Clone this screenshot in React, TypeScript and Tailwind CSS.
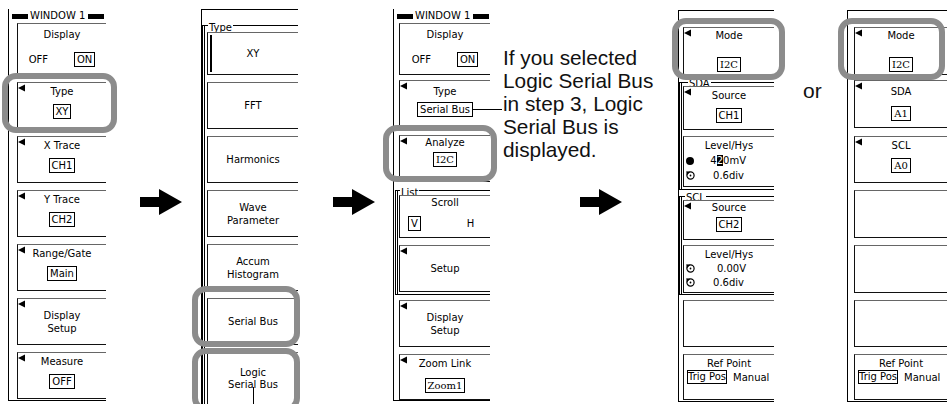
import React from "react";

type Kids = { children?: React.ReactNode };

function Tri() {
  return (
    <svg className="absolute left-0 top-[1px]" width="8" height="8" viewBox="0 0 8 8">
      <polygon points="0,4 7,0.5 7,7.5" fill="#000" />
    </svg>
  );
}

function Box({ className = "", arrow = false, children }: { className?: string; arrow?: boolean } & Kids) {
  return (
    <div className={"relative shrink-0 border-y border-l border-t-[#666] border-b-[#111] border-l-[#111] " + className}>
      {arrow ? <Tri /> : null}
      {children}
    </div>
  );
}

function Val({ children, serif = false }: { serif?: boolean } & Kids) {
  return (
    <span
      className={
        "inline-block h-[15px] whitespace-nowrap border border-black px-[2px] leading-[13px] " +
        (serif ? "font-['DejaVu_Serif',serif]" : "")
      }
    >
      {children}
    </span>
  );
}

function LV({ label, children, pt = "pt-[2px]", mt = "mt-[6px]" }: { label: string; pt?: string; mt?: string } & Kids) {
  return (
    <div className={"flex flex-col items-center " + pt}>
      <div className="h-[13px] whitespace-nowrap leading-[13px]">{label}</div>
      <div className={"flex items-center " + mt}>{children}</div>
    </div>
  );
}

function Center({ children }: Kids) {
  return (
    <div className="flex h-full flex-col items-center justify-center text-center leading-[13px]">{children}</div>
  );
}

function Ring({ className }: { className: string }) {
  return (
    <div className={"pointer-events-none absolute z-10 rounded-[14px] border-[6px] border-[#8c8c8c] " + className} />
  );
}

function Header() {
  return (
    <div className="flex h-[14px] shrink-0 items-center pl-[3px]">
      <span className="h-[5px] w-[16px] bg-black" />
      <span className="ml-[2px] whitespace-nowrap leading-[12px]">WINDOW 1</span>
      <span className="ml-[3px] h-[5px] w-[16px] bg-black" />
    </div>
  );
}

function BigArrow() {
  return (
    <svg width="42" height="26" viewBox="0 0 42 26">
      <polygon points="0,8 19,8 19,0 42,13 19,26 19,18 0,18" fill="#000" />
    </svg>
  );
}

function Knob() {
  return (
    <svg width="9" height="9" viewBox="0 0 9 9">
      <circle cx="4.5" cy="4.5" r="3.6" fill="none" stroke="#000" strokeWidth="1.2" />
      <polygon points="0.3,0.3 4.2,0.8 0.8,4.2" fill="#000" />
      <circle cx="4.5" cy="4.5" r="0.9" fill="#000" />
    </svg>
  );
}

function Dot() {
  return <span className="h-[8px] w-[8px] rounded-full bg-black" />;
}

function OffOn() {
  return (
    <div className="flex items-center">
      <span className="leading-[13px]">OFF</span>
      <span className="ml-[26px]">
        <Val>ON</Val>
      </span>
    </div>
  );
}

function RefPoint({ className }: { className: string }) {
  return (
    <Box className={className}>
      <div className="flex flex-col pt-[2px]">
        <div className="h-[13px] text-center leading-[13px]">Ref Point</div>
        <div className="flex items-center pl-[3px]">
          <span className="inline-block h-[14px] whitespace-nowrap border border-black leading-[12px]">Trig Pos</span>
          <span className="ml-[6px] leading-[13px]">Manual</span>
        </div>
      </div>
    </Box>
  );
}

export default function App() {
  return (
    <div className="relative flex h-[404px] w-[947px] items-start overflow-hidden bg-white font-['DejaVu_Sans',sans-serif] text-[10px] text-black">
      {/* Panel 1 */}
      <div className="ml-[8px] mt-[9px] flex h-[392px] w-[98px] shrink-0 flex-col border-b border-l border-black">
        <Header />
        <div className="flex flex-col gap-[7px] pl-[8px]">
          <Box className="h-[52px]">
            <LV label="Display" pt="pt-[4px]" mt="mt-[11px]">
              <OffOn />
            </LV>
          </Box>
          <Box arrow className="h-[47px]">
            <Ring className="left-[-16px] top-[-10px] h-[60px] w-[115px]" />
            <LV label="Type">
              <Val>XY</Val>
            </LV>
          </Box>
          <Box arrow className="h-[47px]">
            <LV label="X Trace">
              <Val>CH1</Val>
            </LV>
          </Box>
          <Box arrow className="h-[47px]">
            <LV label="Y Trace">
              <Val>CH2</Val>
            </LV>
          </Box>
          <Box arrow className="h-[47px]">
            <LV label="Range/Gate">
              <Val>Main</Val>
            </LV>
          </Box>
          <Box arrow className="h-[47px]">
            <Center>
              <div>Display</div>
              <div>Setup</div>
            </Center>
          </Box>
          <Box arrow className="h-[47px]">
            <LV label="Measure">
              <Val>OFF</Val>
            </LV>
          </Box>
        </div>
      </div>

      {/* Arrow 1 */}
      <div className="ml-[34px] mt-[189px] shrink-0">
        <BigArrow />
      </div>

      {/* Panel 2 */}
      <div className="ml-[19px] mt-[9px] h-[420px] w-[97px] shrink-0 border-l border-t border-black">
        <div className="relative mt-[15px] flex flex-col gap-[7px] border-l-[3px] border-t border-double border-black pl-[2px] pt-[6px]">
          <span className="absolute left-[3px] top-[-4px] bg-white px-[1px] leading-[12px]">Type</span>
          <Box className="h-[43px]">
            <span className="absolute left-[2px] top-[2px] h-[37px] w-[2px] bg-black" />
            <Center>XY</Center>
          </Box>
          <Box className="h-[47px]">
            <Center>FFT</Center>
          </Box>
          <Box className="h-[47px]">
            <Center>Harmonics</Center>
          </Box>
          <Box className="h-[47px]">
            <Center>
              <div>Wave</div>
              <div>Parameter</div>
            </Center>
          </Box>
          <Box className="h-[47px]">
            <Center>
              <div>Accum</div>
              <div>Histogram</div>
            </Center>
          </Box>
          <Box className="h-[47px]">
            <Ring className="left-[-16px] top-[-13px] h-[61px] w-[108px]" />
            <Center>Serial Bus</Center>
          </Box>
          <Box className="h-[70px]">
            <Ring className="left-[-16px] top-[-5px] h-[64px] w-[108px]" />
            <div className="flex flex-col items-center pt-[14px] leading-[12px]">
              <div>Logic</div>
              <div>Serial Bus</div>
            </div>
            <span className="absolute left-[45px] top-[34px] h-[40px] w-px bg-black" />
          </Box>
        </div>
      </div>

      {/* Arrow 2 */}
      <div className="ml-[35px] mt-[189px] shrink-0">
        <BigArrow />
      </div>

      {/* Panel 3 */}
      <div className="ml-[18px] mt-[9px] flex h-[392px] w-[97px] shrink-0 flex-col border-b border-l border-black">
        <Header />
        <Box className="ml-[5px] h-[52px]">
          <LV label="Display" pt="pt-[4px]" mt="mt-[11px]">
            <OffOn />
          </LV>
        </Box>
        <Box arrow className="ml-[5px] mt-[5px] h-[48px]">
          <LV label="Type" pt="pt-[4px]" mt="mt-[4px]">
            <Val>Serial Bus</Val>
          </LV>
          <span className="absolute left-[72px] top-[28px] h-px w-[30px] bg-black" />
        </Box>
        <Box arrow className="ml-[5px] mt-[7px] h-[47px]">
          <Ring className="left-[-17px] top-[-11px] h-[57px] w-[114px]" />
          <LV label="Analyze" pt="pt-0" mt="mt-[3px]">
            <Val serif>I2C</Val>
          </LV>
        </Box>
        <div className="relative ml-[1px] mt-[8px] flex flex-col border-y border-l-[3px] border-double border-black pb-[2px] pl-[1px] pt-[4px]">
          <span className="absolute left-[2px] top-[-4px] bg-white px-[1px] leading-[12px]">List</span>
          <Box className="h-[43px]">
            <div className="flex flex-col">
              <div className="h-[13px] text-center leading-[13px]">Scroll</div>
              <div className="mt-[7px] flex items-center pl-[8px]">
                <Val>V</Val>
                <span className="ml-[46px] leading-[13px]">H</span>
              </div>
            </div>
          </Box>
          <Box arrow className="mt-[7px] h-[47px]">
            <Center>Setup</Center>
          </Box>
        </div>
        <Box arrow className="ml-[5px] mt-[5px] h-[47px]">
          <Center>
            <div>Display</div>
            <div>Setup</div>
          </Center>
        </Box>
        <Box arrow className="ml-[5px] mt-[7px] h-[46px]">
          <LV label="Zoom Link" mt="mt-[8px]">
            <Val serif>Zoom1</Val>
          </LV>
        </Box>
      </div>

      {/* Callout text + arrow 3 */}
      <div className="ml-[13px] flex w-[175px] shrink-0 flex-col">
        <p className="mt-[46px] whitespace-nowrap font-['Liberation_Sans',Arial,sans-serif] text-[20.8px] leading-[23px] text-[#111]">
          If you selected
          <br />
          Logic Serial Bus
          <br />
          in step 3, Logic
          <br />
          Serial Bus is
          <br />
          displayed.
        </p>
        <div className="ml-[77px] mt-[28px]">
          <BigArrow />
        </div>
      </div>

      {/* Panel 4 */}
      <div className="mt-[10px] flex h-[392px] w-[96px] shrink-0 flex-col border-y border-l border-black">
        <Box arrow className="ml-[4px] mt-[16px] h-[48px]">
          <Ring className="left-[-12px] top-[-10px] h-[62px] w-[113px]" />
          <LV label="Mode" pt="pt-[1px]" mt="mt-[15px]">
            <Val serif>I2C</Val>
          </LV>
        </Box>
        <div className="relative mt-[7px] flex flex-col border-y border-l-[3px] border-double border-black pb-[2px] pl-[1px] pt-[3px]">
          <span className="absolute left-[6px] top-[-5px] bg-white px-[1px] leading-[12px]">SDA</span>
          <Box arrow className="h-[44px]">
            <LV label="Source">
              <Val>CH1</Val>
            </LV>
          </Box>
          <Box className="mt-[6px] h-[51px]">
            <div className="flex flex-col pt-[2px]">
              <div className="h-[13px] text-center leading-[13px]">Level/Hys</div>
              <div className="mt-[1px] flex h-[15px] items-center pl-[2px] pr-[28px]">
                <Dot />
                <span className="ml-auto leading-[13px]">
                  4<span className="bg-black text-white">2</span>0mV
                </span>
              </div>
              <div className="flex h-[15px] items-center pl-[2px] pr-[30px]">
                <Knob />
                <span className="ml-auto leading-[13px]">0.6div</span>
              </div>
            </div>
          </Box>
        </div>
        <div className="relative mt-[6px] flex flex-col border-y border-l-[3px] border-double border-black pb-[1px] pl-[1px] pt-[3px]">
          <span className="absolute left-[3px] top-[-5px] bg-white px-[1px] leading-[12px]">SCL</span>
          <Box arrow className="h-[40px]">
            <LV label="Source" pt="pt-0" mt="mt-[3px]">
              <Val>CH2</Val>
            </LV>
          </Box>
          <Box className="mt-[5px] h-[48px]">
            <div className="flex flex-col pt-[2px]">
              <div className="h-[13px] text-center leading-[13px]">Level/Hys</div>
              <div className="flex h-[14px] items-center pl-[2px] pr-[28px]">
                <Knob />
                <span className="ml-auto leading-[13px]">0.00V</span>
              </div>
              <div className="flex h-[14px] items-center pl-[2px] pr-[30px]">
                <Knob />
                <span className="ml-auto leading-[13px]">0.6div</span>
              </div>
            </div>
          </Box>
        </div>
        <Box className="ml-[4px] mt-[5px] h-[47px]" />
        <RefPoint className="ml-[4px] mt-[7px] h-[46px]" />
      </div>

      {/* or */}
      <div className="ml-[29px] mt-[79px] w-[18px] shrink-0 font-['Liberation_Sans',Arial,sans-serif] text-[21px] leading-[23px] text-[#111]">
        or
      </div>

      {/* Panel 5 */}
      <div className="ml-[26px] mt-[10px] flex h-[392px] w-[100px] shrink-0 flex-col border-y border-l border-black">
        <Box arrow className="ml-[6px] mt-[16px] h-[48px]">
          <Ring className="left-[-17px] top-[-10px] h-[62px] w-[107px]" />
          <LV label="Mode" pt="pt-[1px]" mt="mt-[15px]">
            <Val serif>I2C</Val>
          </LV>
        </Box>
        <Box arrow className="ml-[6px] mt-[5px] h-[48px]">
          <LV label="SDA" pt="pt-[4px]" mt="mt-[8px]">
            <Val serif>A1</Val>
          </LV>
        </Box>
        <Box arrow className="ml-[6px] mt-[8px] h-[47px]">
          <LV label="SCL">
            <Val serif>A0</Val>
          </LV>
        </Box>
        <Box className="ml-[6px] mt-[7px] h-[48px]" />
        <Box className="ml-[6px] mt-[7px] h-[48px]" />
        <Box className="ml-[6px] mt-[7px] h-[47px]" />
        <RefPoint className="ml-[6px] mt-[7px] h-[46px]" />
      </div>
    </div>
  );
}
